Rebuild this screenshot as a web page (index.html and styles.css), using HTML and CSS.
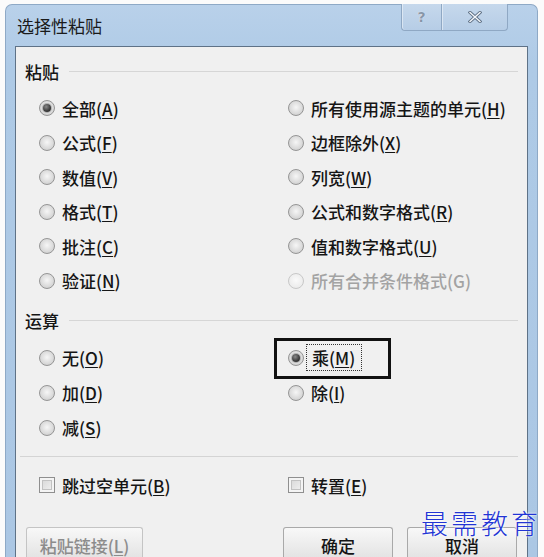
FILE: index.html
```html
<!DOCTYPE html>
<html lang="zh">
<head>
<meta charset="utf-8">
<title>选择性粘贴</title>
<link rel="stylesheet" href="styles.css">
</head>
<body>
<div class="window">
  <div class="titlebar">
    <div class="title">选择性粘贴</div>
    <div class="controls">
      <div class="ctl help">?</div>
      <div class="ctl close">
        <svg width="14" height="12" viewBox="0 0 14 12"><path d="M2 1.5 L12 10.5 M12 1.5 L2 10.5" stroke="#5d6f84" stroke-width="3.2" stroke-linecap="square"/><path d="M2 1.5 L12 10.5 M12 1.5 L2 10.5" stroke="#f4f7fb" stroke-width="1.4" stroke-linecap="square"/></svg>
      </div>
    </div>
  </div>
  <div class="panel">
    <div class="group-head"><span>粘贴</span><i class="rule"></i></div>
    <div class="grid grid-paste">
      <div class="item"><span class="radio checked"></span><span>全部(<u>A</u>)</span></div>
      <div class="item"><span class="radio"></span><span>所有使用源主题的单元(<u>H</u>)</span></div>
      <div class="item"><span class="radio"></span><span>公式(<u>F</u>)</span></div>
      <div class="item"><span class="radio"></span><span>边框除外(<u>X</u>)</span></div>
      <div class="item"><span class="radio"></span><span>数值(<u>V</u>)</span></div>
      <div class="item"><span class="radio"></span><span>列宽(<u>W</u>)</span></div>
      <div class="item"><span class="radio"></span><span>格式(<u>T</u>)</span></div>
      <div class="item"><span class="radio"></span><span>公式和数字格式(<u>R</u>)</span></div>
      <div class="item"><span class="radio"></span><span>批注(<u>C</u>)</span></div>
      <div class="item"><span class="radio"></span><span>值和数字格式(<u>U</u>)</span></div>
      <div class="item"><span class="radio"></span><span>验证(<u>N</u>)</span></div>
      <div class="item disabled"><span class="radio"></span><span>所有合并条件格式(G)</span></div>
    </div>
    <div class="group-head second"><span>运算</span><i class="rule"></i></div>
    <div class="grid grid-op">
      <div class="item"><span class="radio"></span><span>无(<u>O</u>)</span></div>
      <div class="item marked"><span class="radio checked"></span><span class="focus">乘(<u>M</u>)</span><span class="mark-box"></span></div>
      <div class="item"><span class="radio"></span><span>加(<u>D</u>)</span></div>
      <div class="item"><span class="radio"></span><span>除(<u>I</u>)</span></div>
      <div class="item"><span class="radio"></span><span>减(<u>S</u>)</span></div>
      <div class="item"></div>
    </div>
    <div class="sep"></div>
    <div class="grid grid-check">
      <div class="item"><span class="check"></span><span>跳过空单元(<u>B</u>)</span></div>
      <div class="item"><span class="check"></span><span>转置(<u>E</u>)</span></div>
    </div>
    <div class="buttons">
      <div class="btn btn-link disabled">粘贴链接(<u>L</u>)</div>
      <div class="btn btn-ok">确定</div>
      <div class="btn btn-cancel">取消</div>
    </div>
  </div>
</div>
<div class="watermark">最需教育</div>
</body>
</html>
```
FILE: styles.css
```css
html, body {
  margin: 0;
  padding: 0;
  background: #fbfbfb;
  overflow: hidden;
  height: 557px;
}
body {
  font-family: "Noto Sans CJK SC", "Noto Sans", sans-serif;
  font-size: 17px;
  font-weight: 500;
  color: #151515;
  position: relative;
}
.window {
  margin: 4px 0 0 5px;
  width: 533px;
  height: 553px;
  background: linear-gradient(#b9d1ea, #aecae6 60px, #abc7e4);
  border: 1px solid #8ea9c6;
  border-bottom: none;
  border-radius: 7px 7px 0 0;
  padding: 0 9px;
  box-sizing: border-box;
  display: flex;
  flex-direction: column;
}
.titlebar {
  height: 41px;
  flex: none;
  display: flex;
  align-items: center;
}
.title {
  padding-left: 2px;
  font-size: 17px;
  font-weight: 400;
  color: #1a1a1a;
  line-height: 1;
}
.controls {
  margin-left: auto;
  margin-right: 20px;
  align-self: flex-start;
  margin-top: -1px;
  display: flex;
  height: 27px;
}
.ctl {
  height: 27px;
  box-sizing: border-box;
  display: flex;
  align-items: center;
  justify-content: center;
  background: linear-gradient(#c6d8ec, #b6cde6);
  border: 1px solid #8fa8c4;
  border-top: none;
  box-shadow: inset 1px 0 0 rgba(255,255,255,0.45);
}
.help {
  width: 40px;
  border-right: none;
  border-radius: 0 0 0 4px;
  color: #8796a8;
  font-family: "DejaVu Sans", sans-serif;
  font-weight: bold;
  font-size: 14px;
  text-shadow: 0 0 1px #fff;
}
.close {
  width: 67px;
  border-radius: 0 0 4px 0;
}
.panel {
  flex: 1;
  border: 1px solid #5e7287;
  border-bottom: none;
  background: #f0f0f0;
  padding: 14px 9px 0 9px;
  overflow: hidden;
  box-sizing: border-box;
}
.group-head {
  height: 20px;
  display: flex;
  align-items: center;
  gap: 10px;
  line-height: 1;
}
.group-head.second {
  margin-top: 12px;
}
.rule {
  flex: 1;
  height: 1px;
  background: #d6d6d6;
  margin-top: 1px;
}
.grid {
  display: grid;
  grid-template-columns: 249px 1fr;
  padding-left: 14px;
}
.grid-paste {
  margin-top: 10px;
  grid-auto-rows: 34.5px;
}
.grid-op {
  margin-top: 10px;
  grid-auto-rows: 35px;
}
.grid-check {
  margin-top: 13px;
  grid-auto-rows: 30px;
}
.item {
  display: flex;
  align-items: center;
  gap: 7px;
  line-height: 1;
  white-space: nowrap;
}
.item u, .btn u {
  text-decoration: underline;
  text-underline-offset: 2px;
}
.item.disabled {
  color: #a3a3a3;
}
.radio {
  width: 16px;
  height: 16px;
  box-sizing: border-box;
  border-radius: 50%;
  border: 1px solid #959595;
  background: radial-gradient(circle at 50% 45%, #f6f6f6 0, #dcdcdc 55%, #c4c4c4 100%);
  display: inline-flex;
  align-items: center;
  justify-content: center;
  flex: none;
}
.radio.checked::after {
  content: "";
  width: 8px;
  height: 8px;
  border-radius: 50%;
  background: radial-gradient(circle at 40% 35%, #8a8a8a 0, #3a3a3a 60%, #1e1e1e 100%);
  box-shadow: 0 0 0 1px #b0b0b0;
}
.disabled .radio {
  border-color: #c8c8c8;
  background: radial-gradient(circle at 50% 45%, #fafafa 0, #ececec 70%, #e0e0e0 100%);
}
.check {
  width: 16px;
  height: 16px;
  box-sizing: border-box;
  border: 1px solid #8f8f8f;
  background: linear-gradient(135deg, #d4d4d4, #f4f4f4);
  box-shadow: inset 0 0 0 2px #f4f4f4, inset 0 0 0 3px #c2c2c2;
  flex: none;
}
.marked {
  position: relative;
}
.focus {
  outline: 1px dotted #333;
  outline-offset: 4px;
  padding: 0 2px 0 1px;
}
.mark-box {
  position: absolute;
  left: -14px;
  top: -2px;
  width: 117px;
  height: 41px;
  box-sizing: border-box;
  border: 3px solid #111;
}
.sep {
  margin-top: 11px;
  margin-left: -5px;
  height: 1px;
  background: #d4d4d4;
}
.buttons {
  margin-top: 27px;
  display: flex;
  padding: 0 1px;
}
.btn {
  height: 30px;
  box-sizing: border-box;
  border: 1px solid #a9a9a9;
  border-bottom: none;
  border-radius: 3px 3px 0 0;
  background: linear-gradient(#f8f8f8, #ececec 60%, #e4e4e4);
  display: flex;
  align-items: flex-start;
  justify-content: center;
  line-height: 1;
  padding-top: 9px;
}
.btn.disabled {
  color: #8c8c8c;
  border-color: #c4c4c4;
}
.btn-link {
  width: 117px;
}
.btn-ok {
  width: 110px;
  margin-left: auto;
}
.btn-cancel {
  width: 110px;
  margin-left: 14px;
}
.watermark {
  position: absolute;
  left: 421px;
  top: 509px;
  font-size: 27px;
  font-weight: 300;
  line-height: 1;
  letter-spacing: 3px;
  color: #2234d4;
  text-shadow: 0 0 2px #fff, 0 0 2px #fff;
}
```
